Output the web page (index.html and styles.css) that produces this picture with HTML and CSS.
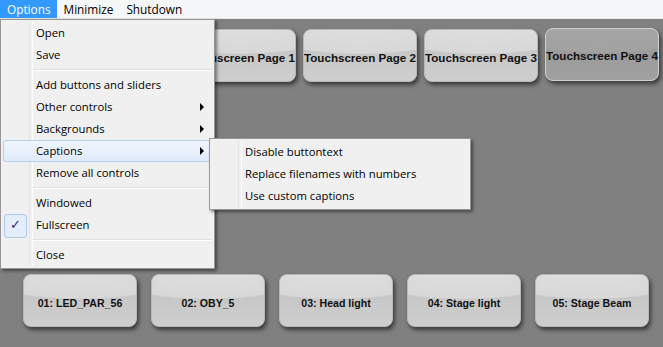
FILE: index.html
```html
<!DOCTYPE html>
<html lang="en">
<head>
    <meta charset="UTF-8">
    <title>Touchscreen</title>
    <link rel="stylesheet" href="styles.css">
</head>
<body>

    <div class="menubar">
        <span class="menubar-item active">Options</span>
        <span class="menubar-item">Minimize</span>
        <span class="menubar-item">Shutdown</span>
    </div>

    <div class="stage">
        <div class="page-row">
            <button class="tile">Touchscreen Page 1</button>
            <button class="tile">Touchscreen Page 2</button>
            <button class="tile">Touchscreen Page 3</button>
            <button class="tile current">Touchscreen Page 4</button>
        </div>

        <div class="control-row">
            <button class="tile">01: LED_PAR_56</button>
            <button class="tile">02: OBY_5</button>
            <button class="tile">03: Head light</button>
            <button class="tile">04: Stage light</button>
            <button class="tile">05: Stage Beam</button>
        </div>
    </div>

    <!-- Options dropdown -->
    <div class="menu main-menu">
        <div class="item">Open</div>
        <div class="item">Save</div>
        <div class="sep"></div>
        <div class="item">Add buttons and sliders</div>
        <div class="item sub">Other controls</div>
        <div class="item sub">Backgrounds</div>
        <div class="item sub hover">Captions</div>
        <div class="item">Remove all controls</div>
        <div class="sep"></div>
        <div class="item">Windowed</div>
        <div class="item checked">Fullscreen</div>
        <div class="sep"></div>
        <div class="item">Close</div>
    </div>

    <!-- Captions submenu -->
    <div class="menu sub-menu">
        <div class="item">Disable buttontext</div>
        <div class="item">Replace filenames with numbers</div>
        <div class="item">Use custom captions</div>
    </div>

</body>
</html>
```

FILE: styles.css
```css
/* General Styles */
* {
    margin: 0;
    padding: 0;
    box-sizing: border-box;
}

body {
    width: 663px;
    height: 347px;
    overflow: hidden;
    background-color: #808080;
    font-family: "Open Sans", "Noto Sans", sans-serif;
    font-size: 11.3px;
    color: #000;
    position: relative;
}

/* Menu bar */
.menubar {
    display: flex;
    height: 19px;
    background: #f5f6f7;
    border-bottom: 1px solid #e6e6e6;
    font-size: 11.8px;
}

.menubar-item {
    padding: 0 6px 0 7px;
    line-height: 18px;
}

.menubar-item.active {
    background: #3399ff;
    color: #fff;
}

/* Button rows */
.stage {
    display: flex;
    flex-direction: column;
}

.page-row {
    display: flex;
    gap: 7px;
    padding: 10px 0 0 182px;
}

.control-row {
    display: flex;
    gap: 14px;
    padding: 192px 0 0 23px;
}

.tile {
    flex: none;
    width: 114px;
    height: 53px;
    border: 1px solid #b8b8b8;
    border-radius: 8px;
    background-image:
        radial-gradient(ellipse 130% 100% at 50% -52%, #e4e4e4 0%, #d8d8d8 97%, rgba(216, 216, 216, 0) 100%),
        linear-gradient(#c2c2c2, #cecece);
    box-shadow: 2px 3px 4px rgba(0, 0, 0, 0.55);
    font-family: "Liberation Sans", Arial, sans-serif;
    font-size: 10.6px;
    font-weight: bold;
    color: #111;
    white-space: nowrap;
    padding-top: 4px;
    display: flex;
    justify-content: center;
    align-items: center;
    overflow: visible;
}

.page-row .tile {
    font-size: 11.6px;
}

.tile.current {
    border-color: #d0d0d0;
    background-image:
        radial-gradient(ellipse 130% 100% at 50% -52%, #a9a9a9 0%, #a2a2a2 97%, rgba(162, 162, 162, 0) 100%),
        linear-gradient(#979797, #a0a0a0);
    margin-top: -1px;
    padding-top: 2px;
}

/* Dropdown menus */
.menu {
    position: absolute;
    background: #f0f0f0;
    border: 1px solid #979797;
    padding: 2px;
    box-shadow: 2px 2px 3px rgba(0, 0, 0, 0.45);
}

.menu::before {
    content: "";
    position: absolute;
    top: 2px;
    bottom: 2px;
    left: 28px;
    width: 2px;
    border-left: 1px solid #e2e3e3;
    border-right: 1px solid #fff;
}

.main-menu {
    left: 0;
    top: 19px;
    width: 215px;
}

.sub-menu {
    left: 209px;
    top: 138px;
    width: 262px;
}

.item {
    position: relative;
    height: 22px;
    line-height: 21px;
    padding-left: 33px;
    white-space: nowrap;
}

.item.sub::after {
    content: "";
    position: absolute;
    right: 8px;
    top: 7px;
    border-left: 4px solid #000;
    border-top: 4px solid transparent;
    border-bottom: 4px solid transparent;
}

.item.hover {
    background: linear-gradient(#f1f6fc, #dfeafa);
    border: 1px solid #b6cdec;
    border-radius: 3px;
    line-height: 19px;
    padding-left: 32px;
}

.item.hover::after {
    right: 7px;
    top: 6px;
}

.item.checked::before {
    content: "\2713";
    position: absolute;
    left: 1px;
    top: 0;
    width: 21px;
    height: 22px;
    line-height: 20px;
    text-align: center;
    font-family: "DejaVu Sans", sans-serif;
    font-size: 13px;
    font-weight: bold;
    color: #1b2f8c;
    background: #e4eefb;
    border: 1px solid #aecaf0;
    border-radius: 3px;
    z-index: 1;
}

.sep {
    height: 8px;
    margin-left: 28px;
    position: relative;
}

.sep::after {
    content: "";
    position: absolute;
    left: 2px;
    right: 0;
    top: 3px;
    border-top: 1px solid #e0e0e0;
    border-bottom: 1px solid #fff;
}
```
